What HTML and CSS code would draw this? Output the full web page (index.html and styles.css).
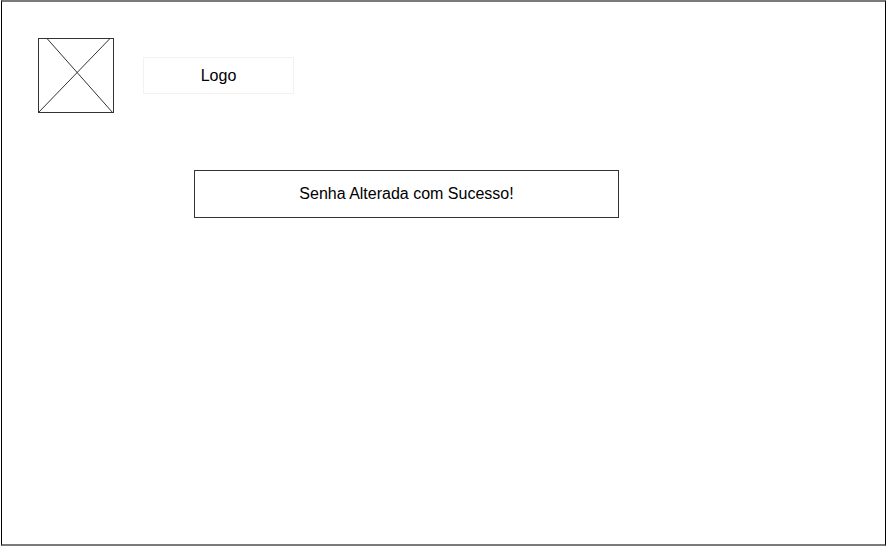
FILE: index.html
```html
<!DOCTYPE html>
<html>
<head>
<meta charset="utf-8">
<link rel="stylesheet" href="styles.css">
</head>
<body>
<div class="frame">
  <div class="header">
    <svg class="placeholder" width="76" height="76" viewBox="0 0 76 76">
      <rect x="0.5" y="0.5" width="75" height="74" fill="#fff" stroke="#333" stroke-width="1"/>
      <line x1="9" y1="0.5" x2="75" y2="75" stroke="#333" stroke-width="1"/>
      <line x1="72" y1="0.5" x2="0.5" y2="74.5" stroke="#333" stroke-width="1"/>
    </svg>
    <div class="logo">Logo</div>
  </div>
  <div class="message">Senha Alterada com Sucesso!</div>
</div>
</body>
</html>
```
FILE: styles.css
```css
html, body {
  margin: 0;
  padding: 0;
  background: #fff;
}
body {
  font-family: "Liberation Sans", Arial, sans-serif;
  color: #000;
}
.frame {
  box-sizing: border-box;
  margin-left: 1px;
  width: 885px;
  height: 546px;
  border-top: 2px solid #7a7a7a;
  border-bottom: 2px solid #7a7a7a;
  border-left: 1px solid #000;
  border-right: 1px solid #000;
  padding: 36px 0 0 36px;
}
.header {
  display: flex;
  align-items: flex-start;
}
.placeholder {
  display: block;
  flex: none;
}
.logo {
  margin-left: 29px;
  margin-top: 19px;
  width: 149px;
  height: 35px;
  border: 1px solid #f2f2f2;
  display: flex;
  align-items: center;
  justify-content: center;
  font-size: 16px;
}
.message {
  margin-top: 56px;
  margin-left: 156px;
  width: 423px;
  height: 46px;
  border: 1px solid #333;
  display: flex;
  align-items: center;
  justify-content: center;
  font-size: 16px;
}
```
